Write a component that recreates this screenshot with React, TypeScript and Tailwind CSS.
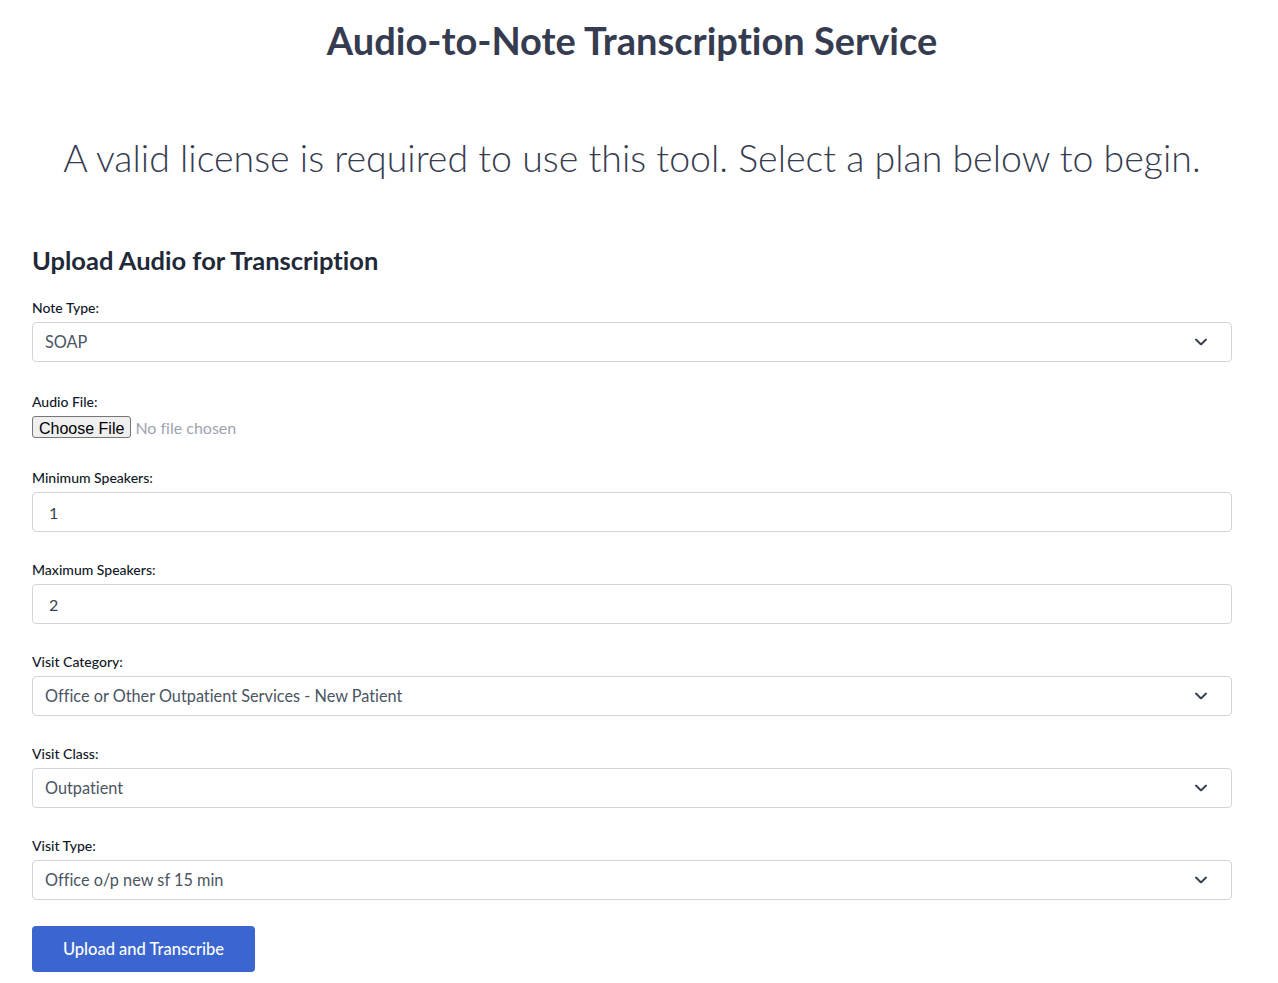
import { useState } from "react";

const fieldLabel = "block text-sm font-medium leading-5 mb-1 text-[#111827]";
const boxBase =
  "w-full h-10 border border-[#d1d5db] rounded bg-white text-base text-[#4b5563] outline-none";

function Chevron() {
  return (
    <svg
      className="absolute right-[25px] top-1/2 -translate-y-1/2 pointer-events-none"
      width="12"
      height="7"
      viewBox="0 0 12 7"
      fill="none"
    >
      <path d="M1 1l5 5 5-5" stroke="#374151" strokeWidth="2" strokeLinecap="round" strokeLinejoin="round" />
    </svg>
  );
}

function SelectField({ label, value, options }: { label: string; value: string; options: string[] }) {
  const [v, setV] = useState(value);
  return (
    <div className="mb-7">
      <label className={fieldLabel}>{label}</label>
      <div className="relative">
        <select
          value={v}
          onChange={(e) => setV(e.target.value)}
          className={boxBase + " appearance-none pl-3 pr-10 text-[16.3px]"}
        >
          {options.map((o) => (
            <option key={o}>{o}</option>
          ))}
        </select>
        <Chevron />
      </div>
    </div>
  );
}

function NumberField({ label, value }: { label: string; value: number }) {
  const [v, setV] = useState(String(value));
  return (
    <div className="mb-7">
      <label className={fieldLabel}>{label}</label>
      <input
        type="number"
        value={v}
        onChange={(e) => setV(e.target.value)}
        className={boxBase + " px-4 text-[#374151]"}
      />
    </div>
  );
}

export default function App() {
  return (
    <div className="min-h-screen bg-white">
      <div className="w-[1264px] px-8 font-['Lato','Noto_Sans',sans-serif] text-[#374151] [font-variant-ligatures:none]">
        <h1 className="pt-5 text-center text-[38px] leading-10 font-bold text-[#363c50]">
          Audio-to-Note Transcription Service
        </h1>
        <p className="mt-[78px] text-center text-[37.5px] leading-10 font-light text-[#363c50]">
          A valid license is required to use this tool. Select a plan below to begin.
        </p>

        <form className="mt-[66px]" onSubmit={(e) => e.preventDefault()}>
          <h2 className="text-[25.5px] leading-8 font-bold text-[#1f2937] mb-[22px]">
            Upload Audio for Transcription
          </h2>

          <SelectField label="Note Type:" value="SOAP" options={["SOAP", "H&P", "Progress Note"]} />

          <div className="mb-7 pt-0.5">
            <label className={fieldLabel}>Audio File:</label>
            <input
              type="file"
              accept="audio/*"
              className="block text-base text-[#9ca3af] file:mr-1 file:h-[22px] file:px-[6px] file:border file:border-[#767676] file:rounded-[3px] file:bg-[#efefef] file:text-black file:font-['Liberation_Sans',Arial,sans-serif] file:text-base"
            />
          </div>

          <NumberField label="Minimum Speakers:" value={1} />
          <NumberField label="Maximum Speakers:" value={2} />

          <SelectField
            label="Visit Category:"
            value="Office or Other Outpatient Services - New Patient"
            options={[
              "Office or Other Outpatient Services - New Patient",
              "Office or Other Outpatient Services - Established Patient",
            ]}
          />
          <SelectField label="Visit Class:" value="Outpatient" options={["Outpatient", "Inpatient"]} />
          <div className="-mb-[2px]">
            <SelectField
              label="Visit Type:"
              value="Office o/p new sf 15 min"
              options={["Office o/p new sf 15 min", "Office o/p new low 30 min"]}
            />
          </div>

          <button
            type="submit"
            className="h-[46px] w-[223px] rounded bg-[#3b66d0] text-white text-[16.5px] font-medium"
          >
            Upload and Transcribe
          </button>
        </form>
      </div>
    </div>
  );
}
